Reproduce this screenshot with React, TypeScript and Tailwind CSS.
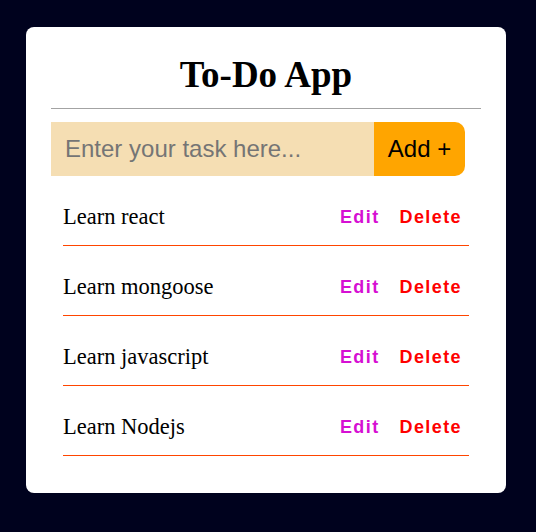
import { useState } from "react";

const serif = "font-['Liberation_Serif','Times_New_Roman',serif]";
const sans = "font-['Liberation_Sans',Arial,sans-serif]";

export default function App() {
  const [tasks] = useState([
    "Learn react",
    "Learn mongoose",
    "Learn javascript",
    "Learn Nodejs",
  ]);
  const [text, setText] = useState("");

  return (
    <div className="min-h-screen bg-[#00021e] pt-[27px] pl-[26px]">
      <div className="w-[480px] h-[466px] bg-white rounded-[8px] px-[25px] pt-[28px]">
        <h1 className={`${serif} text-[37px] font-bold text-black text-center leading-[40px] pb-[13px]`}>
          To-Do App
        </h1>
        <div className="h-px bg-[#a3a3a3] mb-[13px]" />

        {/* input row */}
        <div className="flex w-[414px] h-[54px]">
          <input
            type="text"
            value={text}
            onChange={(e) => setText(e.target.value)}
            placeholder="Enter your task here..."
            className={`${sans} flex-1 min-w-0 bg-[#f5deb3] text-[24px] px-[14px] outline-none placeholder-[#757575]`}
          />
          <button className={`${sans} w-[91px] bg-[#ffa500] text-black text-[24px] rounded-r-[10px]`}>
            Add +
          </button>
        </div>

        <ul className="ml-[12px] w-[406px]">
          {tasks.map((t) => (
            <li
              key={t}
              className="flex items-center justify-between h-[70px] pt-[13px] border-b border-[#ff4500]"
            >
              <span className={`${serif} text-[22.5px] leading-[26px] text-black`}>{t}</span>
              <div className={`${sans} flex items-center gap-[20px] pr-[7px] text-[18px] leading-[26px] font-bold tracking-[1.4px]`}>
                <button className="text-[#d60fd3] leading-[26px]">Edit</button>
                <button className="text-[#ff0000] leading-[26px]">Delete</button>
              </div>
            </li>
          ))}
        </ul>
      </div>
    </div>
  );
}
